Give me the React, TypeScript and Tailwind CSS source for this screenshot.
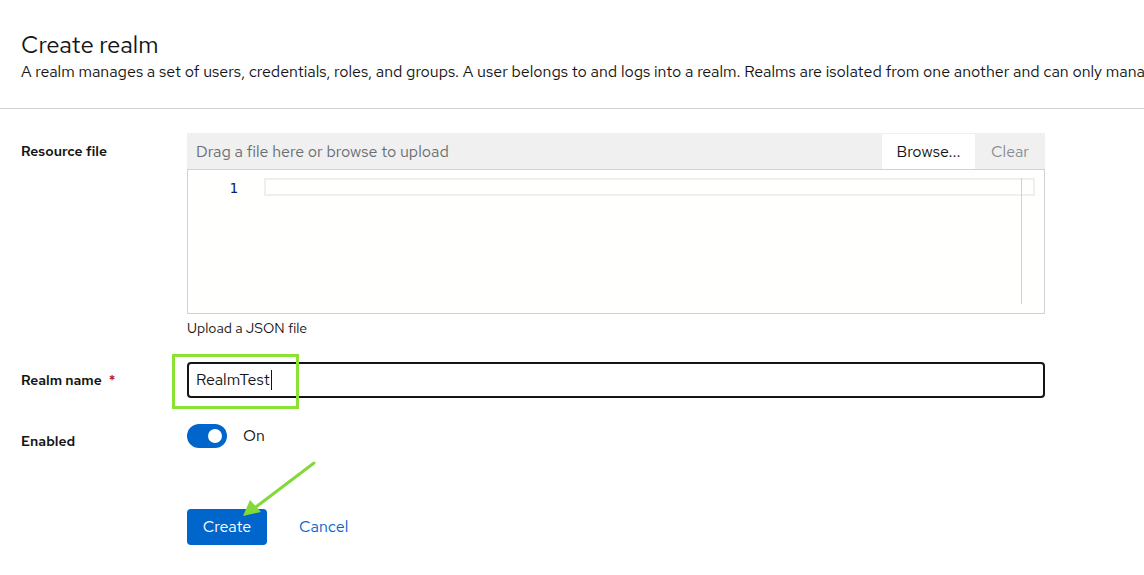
import React from 'react'

const font = { fontFamily: '"Red Hat Text", Inter, "Noto Sans", sans-serif' }

function Label({ children, required }: { children: React.ReactNode; required?: boolean }) {
  return (
    <div className="text-[14px] font-semibold text-[#151515] leading-[21px]">
      {children}
      {required && <span className="ml-[7px] text-[#c9190b]">*</span>}
    </div>
  )
}

export default function App() {
  return (
    <div className="relative w-[1144px] h-[575px] overflow-hidden bg-white" style={font}>
      {/* Page header */}
      <div className="pt-[29px] pb-[24px] pl-[21px] border-b border-[#d2d2d2]">
        <h1 className="text-[24px] leading-[31px] text-[#151515] font-normal">Create realm</h1>
        <p className="text-[16px] leading-[24px] text-[#151515] whitespace-nowrap">
          A realm manages a set of users, credentials, roles, and groups. A user belongs to and logs into a realm. Realms are isolated from one another and can only manage and authenticate the users that they control.
        </p>
      </div>

      {/* Form */}
      <div className="pt-[24px] px-[21px]">
        <div className="grid grid-cols-[166px_858px] gap-y-[24px]">
          <div className="pt-[8px]">
            <Label>Resource file</Label>
          </div>
          <div>
            <div className="flex h-[36px] bg-[#f0f0f0] border-t border-[#f0f0f0]">
              <div className="flex-1 flex items-center pl-[9px] text-[16px] text-[#6a6e73]">
                Drag a file here or browse to upload
              </div>
              <button className="w-[93px] bg-white text-[16px] text-[#151515]">Browse...</button>
              <button className="w-[70px] text-[16px] text-[#8a8d90]">Clear</button>
            </div>
            <div className="h-[145px] border border-[#d2d2d2] bg-[#fffffd] flex pt-[8px]">
              <div className="w-[76px] flex justify-end pr-[26px] pt-[1px] text-[14px] leading-[18px] text-[#0b216f]" style={{ fontFamily: '"DejaVu Sans Mono", monospace' }}>
                1
              </div>
              <div className="flex-1 relative">
                <div className="h-[18px] mr-[9px] border-2 border-[#efefef]"></div>
                <div className="absolute top-0 right-[22px] w-px h-[126px] bg-[#d2d2d2]"></div>
              </div>
            </div>
            <div className="mt-[4px] text-[14px] leading-[21px] text-[#151515]">Upload a JSON file</div>
          </div>

          <div className="pt-[8px] -mt-[1px]">
            <Label required>Realm name</Label>
          </div>
          <div className="-mt-[1px]">
            <div className="h-[36px] border-2 border-[#151515] rounded-[4px] flex items-center pl-[7px] text-[16px] text-[#151515]">
              RealmTest
              <span className="ml-[1px] w-px h-[20px] bg-[#151515]"></span>
            </div>
          </div>

          <div className="pt-[4px] mt-[5px]">
            <Label>Enabled</Label>
          </div>
          <div className="flex items-center gap-[16px] mt-[2px] h-[24px]">
            <div className="w-[40px] h-[24px] rounded-full bg-[#0066cc] flex items-center justify-end pr-[5px]">
              <div className="w-[14px] h-[14px] rounded-full bg-white"></div>
            </div>
            <span className="text-[16px] text-[#151515]">On</span>
          </div>
        </div>

        <div className="ml-[166px] mt-[57px] flex items-center gap-[16px]">
          <button className="h-[36px] w-[80px] rounded-[4px] bg-[#0066cc] text-white text-[16px]">Create</button>
          <button className="h-[36px] px-[16px] text-[#0066cc] text-[16px]">Cancel</button>
        </div>
      </div>

      {/* Annotation highlight */}
      <div className="absolute left-[172px] top-[354px] w-[127px] h-[55px] border-[3px] border-[#8ae234] pointer-events-none"></div>
      <svg className="absolute left-0 top-0 pointer-events-none" width="1144" height="575">
        <line x1="314" y1="463" x2="252" y2="510" stroke="#84d93a" strokeWidth="3" strokeLinecap="round" />
        <polygon points="243,516 250,500 261,512" fill="#84d93a" />
      </svg>
    </div>
  )
}
